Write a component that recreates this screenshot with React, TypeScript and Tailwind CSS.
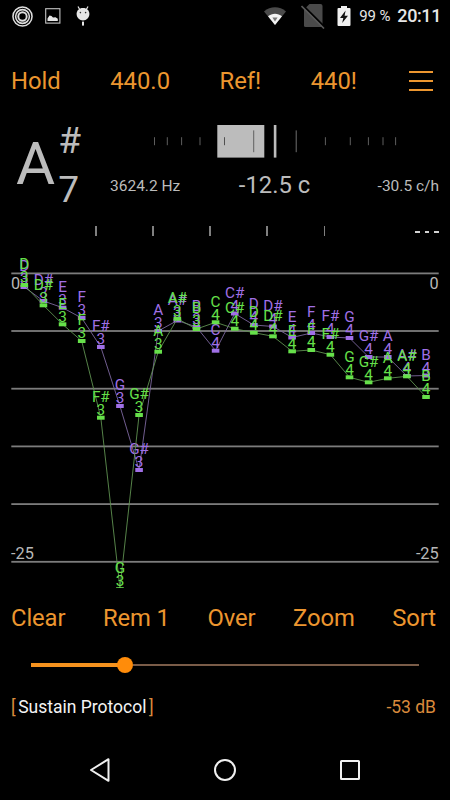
import { clsx } from "clsx";

const NOTES = [
  "D3", "D#3", "E3", "F3", "F#3", "G3", "G#3", "A3", "A#3", "B3", "C4",
  "C#4", "D4", "D#4", "E4", "F4", "F#4", "G4", "G#4", "A4", "A#4", "B4",
];

const previous = [
  287, 301, 307.7, 318, 347, 406, 470, 331, 320.5, 327, 350.7,
  313.5, 325, 326.5, 337.5, 333, 337, 338, 357, 357, 376, 375.5,
];

const current = [
  285, 305.3, 324.3, 341, 417.7, 589.2, 415, 351.7, 318.7, 329, 322.3,
  328.7, 332.7, 336.3, 351.3, 350, 354.7, 377.3, 382.3, 378.3, 376.3, 397,
];

const GRID = [273.4, 331, 388.7, 446.4, 504.1, 561.8];
const CHART_BOTTOM = 588;

const noteX = (i: number) => 24.3 + i * 19.13;

function Series({ values, color, line }: { values: number[]; color: string; line: string }) {
  return (
    <g>
      <polyline
        points={values.map((y, i) => `${noteX(i)},${Math.min(y, CHART_BOTTOM)}`).join(" ")}
        fill="none"
        stroke={line}
        strokeWidth="0.9"
      />
      {values.map((y, i) => {
        const x = noteX(i);
        const name = NOTES[i].slice(0, -1);
        const octave = NOTES[i].slice(-1);
        return (
          <g key={NOTES[i]} fill={color} fontSize="15.3" textAnchor="middle">
            <rect x={x - 3.8} y={y - 2} width="7.6" height={Math.min(4, CHART_BOTTOM - y + 2)} />
            <text x={x} y={y - 15.8}>{name}</text>
            <text x={x} y={y - 2.8}>{octave}</text>
          </g>
        );
      })}
    </g>
  );
}

function CurveChart() {
  return (
    <svg viewBox="0 244 450 344" className="block h-[344px] w-full overflow-visible">
      {GRID.map((y) => (
        <rect key={y} x="11.3" y={y - 0.9} width="427.4" height="1.8" fill="#7c7c7c" />
      ))}
      <g fill="#b8b8b8" fontSize="16.3">
        <text x="11" y="289">0</text>
        <text x="438.7" y="289" textAnchor="end">0</text>
        <text x="11" y="559">-25</text>
        <text x="438.7" y="559" textAnchor="end">-25</text>
      </g>
      <Series values={previous} color="#a070e6" line="#7d689f" />
      <Series values={current} color="#66e04a" line="#5f9150" />
    </svg>
  );
}

function StatusBar() {
  return (
    <div className="flex h-8 shrink-0 items-center pr-[9px] pl-3 text-[#e6e6e6]">
      <svg viewBox="0 0 22 22" className="h-[21px] w-[21px]" fill="none" stroke="#dedede" strokeWidth="1.6">
        <circle cx="11" cy="11" r="10" />
        <circle cx="11" cy="11" r="7.2" />
        <circle cx="11" cy="11" r="4.4" strokeWidth="2" />
      </svg>
      <svg viewBox="0 0 16 16" className="ml-3 h-4 w-4">
        <rect x="0.7" y="0.7" width="14.2" height="14.4" fill="none" stroke="#c4c4c4" strokeWidth="1.1" />
        <path d="M2.5 13V10.5L4.5 7.5L6.5 8L8 9.6L10.5 9.2L12.8 10.8V13Z" fill="#e6e6e6" />
      </svg>
      <svg viewBox="0 0 14 20" className="ml-[15px] h-5 w-[14px]">
        <path d="M2 0.5L4 4M12 0.5L10 4" stroke="#e6e6e6" strokeWidth="1.2" />
        <path d="M7 2C3 2 0.6 4.6 0.6 8C0.6 11.6 3.4 14.4 7 14.4S13.4 11.6 13.4 8C13.4 4.6 11 2 7 2Z" fill="#e6e6e6" />
        <circle cx="4.4" cy="6.6" r="0.8" fill="#333" />
        <circle cx="9.6" cy="6.6" r="0.8" fill="#333" />
        <rect x="6" y="15.6" width="2" height="4" fill="#e6e6e6" />
      </svg>
      <svg viewBox="0 0 22 18" className="ml-auto h-[18px] w-[22px]">
        <path d="M11 18L0 4.4C6.5 -1 15.5 -1 22 4.4Z" fill="#4a4a4a" />
        <path d="M11 18L4 9.2C8 5.8 14 5.8 18 9.2Z" fill="#f2f2f2" />
        <path d="M8.4 10.5H13.6L11 14.6Z" fill="#777" />
      </svg>
      <svg viewBox="0 0 24 26" className="ml-[15px] h-[26px] w-6">
        <path d="M8.5 1H19.5Q21.5 1 21.5 3V22.5Q21.5 24 20 24H4.5Q3 24 3 22.5V6.5Z" fill="#4a4a4a" />
        <path d="M1.5 2L24 24.5" stroke="#000" strokeWidth="2" />
        <path d="M0.5 3L23 25.5" stroke="#5a5a5a" strokeWidth="1.6" />
      </svg>
      <svg viewBox="0 0 14 20" className="mt-[-1px] ml-[12px] h-5 w-[14px]">
        <path d="M4 0H10V2H12.5Q13.5 2 13.5 3V19Q13.5 20 12.5 20H1.5Q0.5 20 0.5 19V3Q0.5 2 1.5 2H4Z" fill="#f0f0f0" />
        <path d="M8.6 4.5L3 12H6.3L5.2 17L11 9.8H7.6Z" fill="#111" />
      </svg>
      <span className="ml-[8px] text-[15px] leading-none tracking-[-0.1px] whitespace-nowrap">99 %</span>
      <span className="ml-[7px] text-[18px] leading-none font-medium tracking-[-0.4px]">20:11</span>
    </div>
  );
}

const FINE_TICKS = [154.5, 167.3, 181.6, 200, 325.4, 350.3, 368.4, 383, 395.6];

function CentMeter() {
  return (
    <svg viewBox="110 121 329 40" className="block h-10 w-[329px]">
      <rect x="217.3" y="125" width="47" height="32.6" fill="#bcbcbc" />
      <rect x="273.8" y="125" width="2.6" height="32.6" fill="#bcbcbc" />
      {FINE_TICKS.map((x) => (
        <rect key={x} x={x - 0.5} y="137.2" width="1" height="8" fill="#5e5e5e" />
      ))}
      <rect x="224" y="137.2" width="1" height="8" fill="#505050" />
      <rect x="253.2" y="130.4" width="1" height="21.8" fill="#606060" />
      <rect x="295.7" y="130.4" width="1" height="21.8" fill="#6e6e6e" />
    </svg>
  );
}

function Readout() {
  return (
    <div className="flex h-[97px] shrink-0 text-[#bcbcbc]">
      <div className="flex w-[110px] shrink-0 pl-4">
        <span className="pt-[8px] text-[60px] leading-[70px]">A</span>
        <div className="ml-[3px] flex flex-col text-[37px] leading-[49px]">
          <span className="mt-[-5px]">#</span>
          <span>7</span>
        </div>
      </div>
      <div className="flex w-[329px] flex-col">
        <CentMeter />
        <div className="mt-[11px] flex h-7 items-center justify-between">
          <span className="w-[110px] pt-px text-[15.5px]">3624.2 Hz</span>
          <span className="text-[23.8px]">-12.5 c</span>
          <span className="w-[110px] pt-px text-right text-[15.5px]">-30.5 c/h</span>
        </div>
      </div>
    </div>
  );
}

function TickRow() {
  return (
    <div className="flex h-[26px] shrink-0 items-center pr-[11px] pl-[95px]">
      <div className="flex w-[230px] justify-between">
        {[0, 1, 2, 3, 4].map((i) => (
          <div key={i} className="h-[10px] w-[1.5px] bg-[#808080]" />
        ))}
      </div>
      <div className="ml-auto flex gap-[5px] pt-0.5">
        {[0, 1, 2].map((i) => (
          <div key={i} className="h-0.5 w-[4.7px] bg-[#d2d2d2]" />
        ))}
      </div>
    </div>
  );
}

function ButtonRow({ labels, className }: { labels: string[]; className?: string }) {
  return (
    <div className={clsx("flex shrink-0 items-center justify-between text-[23.8px] leading-7 text-[#ec962f]", className)}>
      {labels.map((label) => (
        <button key={label}>{label}</button>
      ))}
    </div>
  );
}

export default function App() {
  return (
    <div className="flex h-[800px] w-[450px] flex-col overflow-hidden bg-black font-['Roboto',sans-serif]">
      <StatusBar />
      <div className="mt-[9px] flex h-20 shrink-0 items-center justify-between pr-[17px] pl-[11px]">
        <ButtonRow labels={["Hold", "440.0", "Ref!", "440!"]} className="w-[346px]" />
        <button className="flex flex-col gap-[7px]">
          <span className="block h-[2px] w-6 bg-[#ec962f]" />
          <span className="block h-[2px] w-6 bg-[#ec962f]" />
          <span className="block h-[2px] w-6 bg-[#ec962f]" />
        </button>
      </div>
      <Readout />
      <TickRow />
      <CurveChart />
      <ButtonRow
        labels={["Clear", "Rem 1", "Over", "Zoom", "Sort"]}
        className="h-[60px] pr-[14px] pl-[11px] tracking-[-0.1px]"
      />

      <div className="flex h-[34px] shrink-0 items-center pr-[31px] pl-[31px]">
        <div className="h-1 w-[88px] bg-[#f5921e]" />
        <div className="-ml-0.5 h-[15.5px] w-[15.5px] rounded-full bg-[#ff8c0a]" />
        <div className="h-0.5 flex-1 bg-[#7a5c48]" />
      </div>

      <div className="flex h-[50px] shrink-0 items-center justify-between pr-[14px] pl-[11px] text-[17.5px] text-[#d98a3c]">
        <div className="flex">
          <span>[</span>
          <span className="mx-[2.5px] text-[#f4f4f4]">Sustain Protocol</span>
          <span>]</span>
        </div>
        <span>-53 dB</span>
      </div>

      <div className="mt-auto flex h-[60px] shrink-0 items-center justify-center gap-[101px]">
        <svg viewBox="0 0 24 26" className="h-[26px] w-6" fill="none" stroke="#f0f0f0" strokeWidth="2" strokeLinejoin="round">
          <path d="M20.5 2.2V23.8L3 13Z" />
        </svg>
        <svg viewBox="0 0 24 24" className="h-6 w-6" fill="none" stroke="#f0f0f0" strokeWidth="2">
          <circle cx="12" cy="12" r="10" />
        </svg>
        <svg viewBox="0 0 24 24" className="h-6 w-6" fill="none" stroke="#f0f0f0" strokeWidth="2">
          <rect x="3" y="3" width="18" height="18" rx="0.5" />
        </svg>
      </div>
    </div>
  );
}
